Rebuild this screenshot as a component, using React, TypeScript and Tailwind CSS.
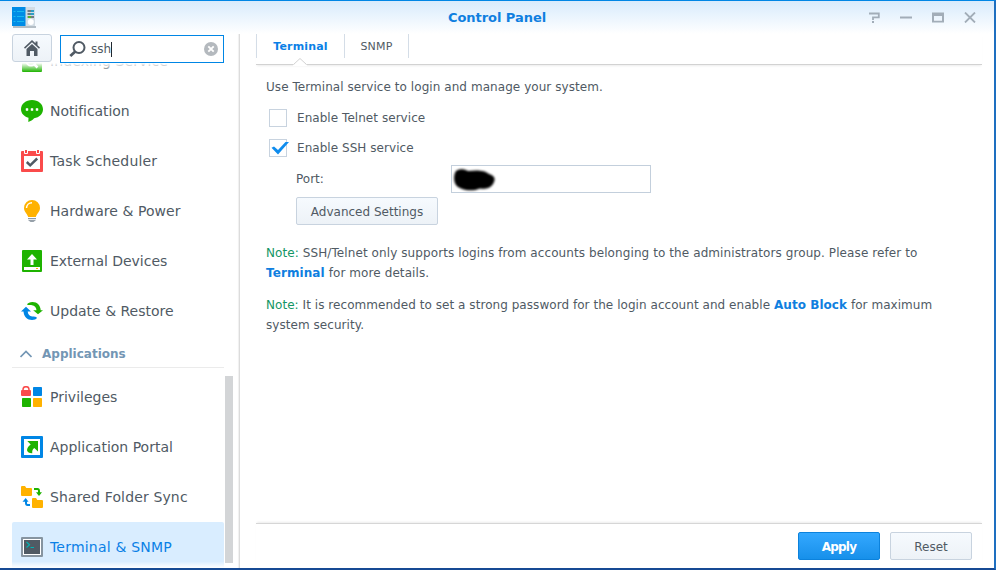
import React from "react";

const NotificationIcon = () => (
  <svg width="22" height="22" viewBox="0 0 22 22">
    <path d="M11 0C4.800 0 0 4 0 9.300c0 4 3 7.300 7.500 8.500L7.300 22c2.300-.6 4.500-2 5.800-3.700C18.300 17.600 22 14 22 9.300 22 4 17.200 0 11 0z" fill="#1eb300" />
    <path d="M5 8.500h2v2H5zM10 8.500h2v2h-2zM15 8.500h2v2h-2z" fill="#fff" stroke="#fff" strokeWidth=".5" />
  </svg>
);

const TaskIcon = () => (
  <svg width="22" height="22" viewBox="0 0 22 22">
    <rect y="1" width="22" height="21" rx="1" fill="#fa4b4b" />
    <rect x="3" y="6" width="16" height="13" fill="#fff" />
    <path d="M3.500 0v3.500h3V0M15.500 0v3.500h3V0" fill="#fa4b4b" stroke="#fff" />
    <path d="M5.800 12l3.400 3.300 7-6.800" stroke="#505a64" strokeWidth="2.500" fill="none" />
  </svg>
);

const BulbIcon = () => (
  <svg width="22" height="22" viewBox="0 0 22 22">
    <path d="M11 0a8 8 0 0 0-8 8c0 4 3 5 4.200 9h7.600c1.200-4 4.200-5 4.200-9a8 8 0 0 0-8-8z" fill="#ffb200" />
    <path d="M5.500 8A5.500 5.500 0 0 1 11 2.800" stroke="#fff" strokeWidth="1.500" fill="none" />
    <path d="M7 18h8v1.200H7z" fill="#8c9aa5" />
    <path d="M7 20.200h8l-2.500 1.600h-3z" fill="#73818c" />
  </svg>
);

const ExternalIcon = () => (
  <svg width="22" height="22" viewBox="0 0 22 22">
    <rect x="1" width="20" height="22" rx="1" fill="#1eb300" />
    <path d="M11 4l5 5.500h-3.500V15h-3V9.500H6z" fill="#fff" />
    <path d="M3 17h16v3H3z" fill="#fff" />
    <path d="M15 18h2v1h-2z" fill="#ffb200" />
  </svg>
);

const UpdateIcon = () => (
  <svg width="22" height="22" viewBox="0 0 22 22">
    <path d="M6 4.200C6.800 3.200 9 2 11.500 2c4.700 0 8 3.500 8.200 8.200H22L17 14.300l-4.800-4.100h3.300C15.300 7.500 13.500 5.500 11 5.200 9 4.800 7 5.600 6 4.200z" fill="#1eb300" />
    <path d="M16 18c-.8 1-2.500 2-5 2-4.700 0-8.200-3.500-8.500-8.500H0L5 6.800l5 4.700H6.700c.2 2.800 2 4.800 4.500 5.100 2 .3 3.900-.2 4.800 1.400z" fill="#0086e5" />
  </svg>
);

const PrivilegesIcon = () => (
  <svg width="22" height="22" viewBox="0 0 22 22">
    <path d="M2 5V3.700a3 3 0 0 1 6 0V5" fill="none" stroke="#fa4b4b" strokeWidth="1.500" />
    <rect y="4" width="10" height="6" rx="1" fill="#fa4b4b" />
    <rect x="12" y="1" width="9" height="9" rx=".7" fill="#0086e5" />
    <rect x="1" y="12" width="9" height="9" rx=".7" fill="#1eb300" />
    <rect x="12" y="12" width="9" height="9" rx=".7" fill="#ffb200" />
  </svg>
);

const PortalIcon = () => (
  <svg width="22" height="22" viewBox="0 0 22 22">
    <rect width="22" height="22" rx="1" fill="#0086e5" />
    <path d="M3 3h16v16H3z" fill="#fff" />
    <path d="M6.300 5H17v10.500L13.300 12C11.500 13.200 11 15 11.300 17.300 8.500 17.500 6.500 16 6 14.200c.2-2.400 1.500-4.200 3.700-5.700z" fill="#1eb300" />
  </svg>
);

const FolderSyncIcon = () => (
  <svg width="22" height="22" viewBox="0 0 22 22">
    <path d="M0 1q0-1 1-1h3l1.300 2H10q1 0 1 1v6q0 1-1 1H1q-1 0-1-1z" fill="#ffb200" />
    <path d="M11 13q0-1 1-1h3l1.300 2H21q1 0 1 1v6q0 1-1 1h-9q-1 0-1-1z" fill="#ffb200" />
    <path d="M13 3h3.500q1.500 0 1.500 2v2" stroke="#1eb300" strokeWidth="2" fill="none" />
    <path d="M15 6.300h6L18 10z" fill="#1eb300" />
    <path d="M9 19H6.500Q5 19 5 17v-2" stroke="#0086e5" strokeWidth="2" fill="none" />
    <path d="M1.500 15.800h6L4.700 12z" fill="#0086e5" />
  </svg>
);

const TerminalIcon = () => (
  <svg width="22" height="22" viewBox="0 0 22 22">
    <rect y="1" width="22" height="20" rx="1" fill="#8694a0" />
    <path d="M2 3h18v16H2z" fill="#fff" />
    <path d="M3 4h16v14H3z" fill="#505a64" />
    <path d="M5.500 6l3 2.800-3 2.700M9.500 11.500H13" stroke="#00b4b4" strokeWidth="1.200" fill="none" />
  </svg>
);

const IndexingIcon = () => (
  <svg width="22" height="22" viewBox="0 0 22 22">
    <rect x="1" width="20" height="22" rx="1" fill="#1eb300" />
    <circle cx="10" cy="11" r="4.500" fill="none" stroke="#fff" strokeWidth="2" />
    <path d="M13 14l3.500 3.500" stroke="#fff" strokeWidth="2.500" />
  </svg>
);

type Item = { label: string; icon: React.ReactNode; spacing: string; active?: boolean };

const system: Item[] = [
  { label: "Indexing Service", icon: <IndexingIcon />, spacing: "tracking-[0.1px]" },
  { label: "Notification", icon: <NotificationIcon />, spacing: "tracking-[-0.06px]" },
  { label: "Task Scheduler", icon: <TaskIcon />, spacing: "tracking-[0.18px]" },
  { label: "Hardware & Power", icon: <BulbIcon />, spacing: "tracking-[0.05px]" },
  { label: "External Devices", icon: <ExternalIcon />, spacing: "tracking-[-0.03px]" },
  { label: "Update & Restore", icon: <UpdateIcon />, spacing: "tracking-[0px]" },
];

const applications: Item[] = [
  { label: "Privileges", icon: <PrivilegesIcon />, spacing: "tracking-[0px]" },
  { label: "Application Portal", icon: <PortalIcon />, spacing: "tracking-[0px]" },
  { label: "Shared Folder Sync", icon: <FolderSyncIcon />, spacing: "tracking-[0.14px]" },
  { label: "Terminal & SNMP", icon: <TerminalIcon />, spacing: "tracking-[0.2px]", active: true },
];

const Row = ({ item }: { item: Item }) => (
  <div
    className={`flex h-[50px] w-[212px] shrink-0 items-center gap-[7px] rounded-[2px] pl-[9px] text-[14px] whitespace-nowrap ${
      item.active ? "bg-[#d9edff] text-[#0a80e6]" : "text-[#505a64]"
    }`}
  >
    <span className="size-[22px] shrink-0">{item.icon}</span>
    <span className={item.spacing}>{item.label}</span>
  </div>
);

const Sidebar = () => (
  <aside className="flex w-[240px] shrink-0 flex-col border-r border-[#dcdcdc] pl-3 shadow-[inset_-2px_0_1px_-1px_#f0f0f0]">
    <div className="flex h-[29px] shrink-0 gap-2">
      <button className="flex h-7 w-10 items-center justify-center rounded-[3px] border border-[#c8d3df] bg-linear-to-b from-[#f6fafe] to-[#edf2f7]">
        <svg width="16" height="16" viewBox="0 0 16 16" fill="#505a64">
          <path d="M8 0L0 7.500l1 1.300 7-6.500 7 6.500 1-1.300-2.500-2.300V1.500h-2v1.800z" />
          <path d="M8 4L2.500 9v7H6v-5h4v5h3.500V9z" />
        </svg>
      </button>
      <div className="mt-px flex h-7 w-[164px] items-center border border-[#0086e5] bg-white pr-[5px] pl-[8px]">
        <svg width="17" height="17" viewBox="0 0 17 17" fill="none" stroke="#505a64">
          <circle cx="10" cy="6.500" r="5.500" strokeWidth="2" />
          <path d="M6.300 10.500L1.300 15" strokeWidth="2.800" />
        </svg>
        <span className="ml-[5px] text-[12px] text-[#505a64]">ssh</span>
        <span className="h-[15px] w-px bg-[#202830]" />
        <svg className="ml-auto" width="14" height="14" viewBox="0 0 14 14">
          <circle cx="7" cy="7" r="7" fill="#b4b9be" />
          <path d="M4.300 4.300l5.400 5.400M9.700 4.300L4.300 9.700" stroke="#fff" strokeWidth="1.900" />
        </svg>
      </div>
    </div>
    <div className="relative flex min-h-0 flex-1">
      <div className="flex w-[213px] flex-col overflow-hidden">
        <div className="-mt-[27px] flex shrink-0 flex-col">
          {system.map((item) => <Row key={item.label} item={item} />)}
        </div>
        <div className="flex h-8 w-[212px] shrink-0 items-center gap-[10px] border-b border-[#ebebeb] pl-2 text-[12px] font-bold text-[#7396b4]">
          <svg className="mt-[5px]" width="12" height="8" viewBox="0 0 12 8">
            <path d="M.5 7L6 1.500 11.500 7" fill="none" stroke="#7396b4" strokeWidth="1.700" />
          </svg>
          <span className="mt-[5px]">Applications</span>
        </div>
        <div className="mt-1 flex shrink-0 flex-col">
          {applications.map((item) => <Row key={item.label} item={item} />)}
        </div>
      </div>
      <div className="mt-[313px] h-[187px] w-2 bg-[#d3d5d7]" />
      <div className="absolute top-0 left-0 h-[9px] w-[212px] bg-linear-to-b from-white to-white/0" />
      <div className="absolute bottom-0 left-0 h-[6px] w-[212px] bg-linear-to-b from-white/10 to-white" />
    </div>
  </aside>
);

const Titlebar = () => (
  <header className="flex h-[33px] shrink-0 items-center bg-linear-to-b from-[#d8ebfc] to-white pl-3 pr-[18px]">
    <svg width="24" height="21" viewBox="0 0 24 21">
      <path d="M1 19h23v2H1z" fill="#b4bec6" />
      <path d="M13 0h10v19H13z" fill="#d2dce4" />
      <path d="M0 0h13.500v19H0z" fill="#008ce6" />
      <path d="M1.500 4.500h2M5 4.500h7M1.500 9.500h2M5 9.500h7M1.500 14.500h2M5 14.500h7" stroke="#19b9f0" />
      <path d="M15.500 4H22M15.500 7H22M15.500 10H22" stroke="#505a64" strokeWidth="1.600" />
      <path d="M19 4h3M18.500 7H22" stroke="#14aadc" strokeWidth="1.600" />
      <path d="M16 10h3" stroke="#50c814" strokeWidth="1.600" />
      <circle cx="18.800" cy="15" r="3" fill="#fff" />
    </svg>
    <h1 className="flex-1 pl-[90px] text-center text-[13px] font-bold tracking-[-0.04px] text-[#0f7fe0]">Control Panel</h1>
    <div className="flex items-center gap-5 text-[#a2adb8]">
      <svg width="12" height="11" viewBox="0 0 12 11" fill="none" stroke="currentColor" strokeWidth="2">
        <path d="M1 1.500h9.800v3.800H5V8" strokeWidth="1.800" />
        <path d="M4 10h2" />
      </svg>
      <svg width="12" height="11" viewBox="0 0 12 11"><path d="M0 4.500h12v2H0z" fill="currentColor" /></svg>
      <svg width="12" height="11" viewBox="0 0 12 11">
        <path d="M0 .5h12v10H0zM2 4v4.700h8V4z" fill="currentColor" fillRule="evenodd" />
      </svg>
      <svg width="12" height="11" viewBox="0 0 12 11">
        <path d="M1 .5l10 10M11 .5l-10 10" fill="none" stroke="currentColor" strokeWidth="1.800" />
      </svg>
    </div>
  </header>
);

const buttonBase = "flex h-7 items-center justify-center rounded-[2px] border text-[12px]";

export default function App() {
  return (
    <div className="flex h-[570px] w-[996px] flex-col overflow-hidden border-t border-r-2 border-b-2 border-t-[#0086e5] border-r-[#1e6fc0] border-b-[#164a94] bg-white font-['DejaVu_Sans',Verdana,sans-serif] text-[12px] text-[#505a64]">
      <Titlebar />
      <div className="flex min-h-0 flex-1">
        <Sidebar />
        <main className="flex flex-1 flex-col pr-3 pl-4">
          <nav className="relative flex h-[31px] shrink-0 border-b border-[#d2d2d2] shadow-[0_2px_2px_-1px_#ececec]">
            <div className="flex h-6 w-[89px] items-center justify-center border-x border-[#d4dde7] text-[11px] font-bold tracking-[0.15px] text-[#0a80e6]"><span className="mt-0.5">Terminal</span></div>
            <div className="flex h-6 w-16 items-center justify-center border-r border-[#d4dde7] text-[11px] tracking-[0.2px]"><span className="mt-0.5">SNMP</span></div>
            <svg className="absolute top-[24px] left-[37px]" width="14" height="8" viewBox="0 0 14 8">
              <path d="M0 6.500h1L7 .5l6 6h1V8H0z" fill="#fff" />
              <path d="M.5 6.500L7 .5l6.500 6" fill="none" stroke="#d2d2d2" />
            </svg>
          </nav>
          <section className="flex flex-1 flex-col pl-[10px] leading-5 whitespace-nowrap">
            <p className="mt-3 tracking-[0.06px]">Use Terminal service to login and manage your system.</p>
            <div className="mt-[11px] flex items-center gap-[10px] pl-[3px] tracking-[0.05px]">
              <span className="size-[18px] border border-[#c8d3df]" />
              <span>Enable Telnet service</span>
            </div>
            <div className="mt-[10px] flex items-center gap-[10px] pl-[3px] tracking-[0.05px]">
              <span className="size-[18px] border border-[#c8d3df]">
                <svg className="overflow-visible" width="16" height="16" viewBox="0 0 16 16">
                  <path d="M1.500 7.800L4 6.500 8 10 15.500 2h3.500L8 14.500z" fill="#0f8cee" />
                </svg>
              </span>
              <span>Enable SSH service</span>
            </div>
            <div className="mt-[7px] flex items-center pl-[30px]">
              <span className="w-[155px]">Port:</span>
              <div className="h-7 w-[200px] border border-[#c3cfdc]">
                <svg width="50" height="26" viewBox="0 0 50 26">
                  <defs><filter id="soft"><feGaussianBlur stdDeviation="1" /></filter></defs>
                  <path d="M4 5C7 2.500 12 2.500 16 5c8-1 17-1 21 3 6 2 7 5 4 10-3 5-9 5-13 4.500-7 3-15 2-20-.5C1 20 1 9 4 5z" filter="url(#soft)" />
                </svg>
              </div>
            </div>
            <button className={`${buttonBase} mt-1 ml-[30px] w-[142px] border-[#c8d3df] bg-linear-to-b from-[#f6fafe] to-[#edf2f7]`}><span className="mt-0.5">Advanced Settings</span></button>
            <p className="mt-[18px] tracking-[0.09px]">
              <span className="text-[#149664]">Note:</span> SSH/Telnet only supports logins from accounts belonging to the administrators group. Please refer to<br />
              <b className="text-[#0f7fe0]">Terminal</b> for more details.
            </p>
            <p className="mt-3 tracking-[0.05px]">
              <span className="text-[#149664]">Note:</span> It is recommended to set a strong password for the login account and enable <b className="text-[#0f7fe0]">Auto Block</b> for maximum<br />
              system security.
            </p>
          </section>
          <footer className="flex h-[45px] shrink-0 justify-end gap-[10px] border-t border-[#d6d6d6] pt-2 pr-[10px] shadow-[0_-2px_2px_-1px_#ececec]">
            <button className={`${buttonBase} w-[82px] border-[#0c82dc] bg-linear-to-b from-[#33a8ff] to-[#1690ea] font-bold tracking-[-0.8px] text-white`}><span className="mt-0.5">Apply</span></button>
            <button className={`${buttonBase} w-[82px] border-[#c8d3df] bg-linear-to-b from-[#f6fafe] to-[#edf2f7]`}><span className="mt-0.5">Reset</span></button>
          </footer>
        </main>
      </div>
    </div>
  );
}
